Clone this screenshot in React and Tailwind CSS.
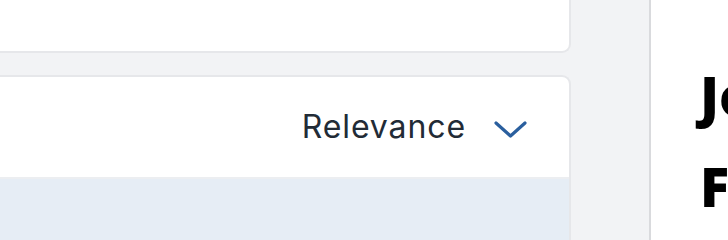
export default function App() {
  return (
    <div className="w-[728px] h-[240px] overflow-hidden flex bg-[#f2f3f5] font-['Inter',sans-serif]">
      <div className="w-[571px] flex flex-col gap-[22px] shrink-0">
        <div className="h-[53px] bg-white border-r-2 border-b-2 border-[#e6e7ea] rounded-br-[9px]" />
        <div className="flex-1 bg-white border-t-2 border-r-2 border-[#e6e7ea] rounded-tr-[9px] flex flex-col">
          <div className="h-[102px] flex items-center justify-end pr-[42px] border-b-2 border-[#eceef1]">
            <span className="text-[32px] tracking-[0.9px] text-[#222b36] leading-none">
              Relevance
            </span>
            <svg
              className="ml-[28px] mt-[4px]"
              width="33"
              height="17"
              viewBox="0 0 33 17"
              fill="none"
              stroke="#2a5f9e"
              strokeWidth="3.2"
              strokeLinecap="round"
              strokeLinejoin="round"
            >
              <polyline points="2,2 16.5,15 31,2" />
            </svg>
          </div>
          <div className="flex-1 bg-[#e6edf5]" />
        </div>
      </div>
      <div className="w-[78px] shrink-0" />
      <div className="flex-1 bg-white border-l-2 border-[#d9dadd] pl-[49px] pt-[50px]">
        <h1 className="font-['Open_Sans',sans-serif] font-extrabold text-[54px] leading-[91px] text-black whitespace-nowrap">
          Job
          <br />
          Feed
        </h1>
      </div>
    </div>
  );
}
